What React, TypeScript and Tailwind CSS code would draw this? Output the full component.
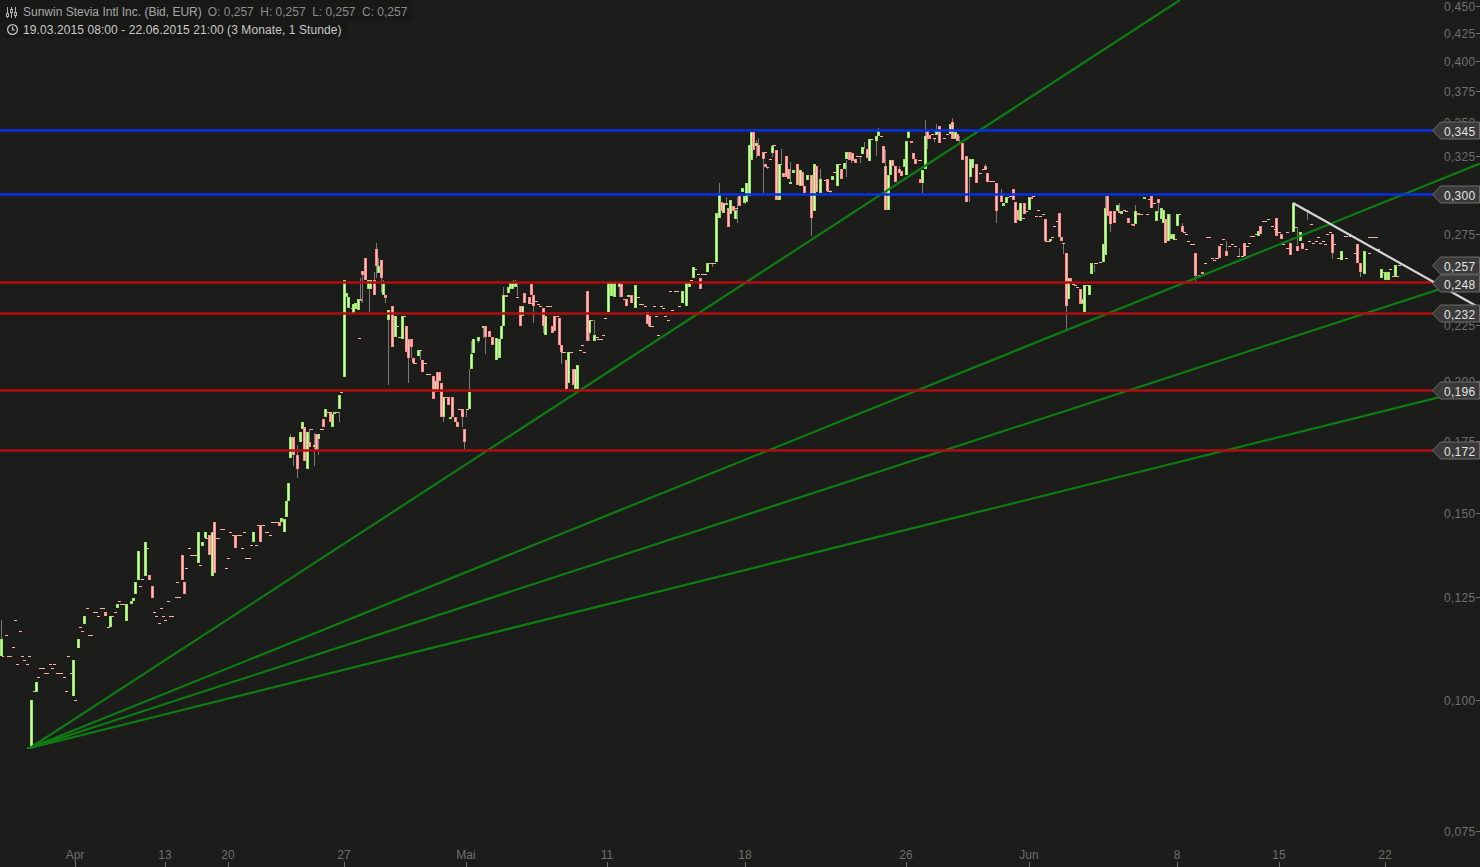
import React from 'react';

type Bar = [number, number, number];

const greens: Bar[] = [
  [1, 639, 656], [31, 700, 748], [36, 682, 692], [73, 660, 696], [78, 639, 648], [84, 616, 624], [110, 616, 627],
  [117, 604, 608], [126, 604, 621], [131, 601, 604], [133, 598, 601], [135, 582, 594], [138, 551, 580], [145, 542, 576],
  [198, 532, 563], [202, 542, 546], [205, 532, 538], [212, 532, 576], [253, 532, 542], [281, 518, 522], [284, 519, 532],
  [286, 501, 517], [288, 483, 501], [290, 437, 458], [300, 432, 442], [302, 422, 429], [307, 432, 469], [314, 445, 447],
  [318, 434, 439], [325, 409, 417], [332, 414, 427], [334, 412, 414], [339, 395, 409], [344, 280, 377], [346, 293, 297],
  [348, 297, 308], [353, 304, 314], [355, 303, 309], [358, 299, 310], [368, 280, 289], [370, 280, 289], [378, 266, 273],
  [383, 284, 295], [388, 310, 320], [395, 316, 337], [402, 316, 339], [418, 350, 356], [435, 381, 392], [443, 397, 417],
  [450, 417, 419], [469, 392, 409], [471, 354, 369], [473, 339, 353], [478, 337, 341], [483, 326, 328], [496, 338, 360],
  [499, 339, 358], [501, 326, 339], [503, 295, 326], [508, 287, 293], [510, 283, 289], [512, 283, 289], [515, 283, 287],
  [522, 306, 316], [545, 316, 335], [568, 352, 383], [575, 369, 389], [577, 365, 389], [589, 320, 333], [594, 335, 341],
  [608, 283, 312], [611, 283, 296], [614, 283, 297], [619, 283, 287], [628, 295, 297], [635, 285, 308], [682, 291, 303],
  [686, 283, 306], [689, 283, 287], [693, 267, 278], [707, 263, 272], [716, 213, 262], [719, 194, 218], [723, 203, 213],
  [730, 200, 214], [735, 210, 219], [742, 188, 192], [744, 196, 203], [746, 183, 202], [749, 145, 196], [751, 132, 160],
  [756, 143, 146], [772, 146, 153], [779, 164, 200], [790, 182, 184], [793, 170, 173], [800, 170, 186], [807, 175, 180],
  [814, 164, 211], [820, 179, 193], [832, 176, 180], [837, 164, 186], [844, 163, 169], [846, 152, 159], [862, 147, 154],
  [869, 139, 161], [876, 136, 141], [878, 131, 136], [888, 175, 210], [890, 160, 175], [904, 159, 167], [906, 141, 175],
  [908, 131, 138], [922, 170, 183], [925, 136, 169], [936, 131, 135], [950, 124, 134], [955, 132, 139], [970, 159, 177],
  [972, 159, 168], [1003, 203, 206], [1006, 197, 203], [1020, 203, 221], [1029, 197, 210], [1050, 239, 241],
  [1068, 278, 299], [1082, 299, 304], [1084, 285, 312], [1089, 285, 295], [1091, 263, 274], [1103, 244, 262],
  [1105, 208, 255], [1117, 205, 211], [1121, 211, 214], [1135, 211, 224], [1144, 197, 199], [1156, 211, 221],
  [1161, 208, 219], [1163, 210, 223], [1168, 214, 241], [1171, 234, 239], [1173, 234, 239], [1177, 214, 226],
  [1258, 231, 236], [1268, 219, 220], [1293, 203, 232], [1300, 232, 241], [1341, 251, 260], [1364, 251, 274],
  [1381, 269, 278], [1385, 272, 280], [1388, 272, 280], [1395, 265, 276],
];

const reds: Bar[] = [
  [105, 612, 616], [149, 575, 580], [152, 586, 598], [182, 555, 580], [184, 582, 594], [209, 535, 555], [214, 522, 573],
  [235, 535, 548], [260, 525, 542], [279, 522, 526], [293, 437, 455], [297, 455, 469], [304, 427, 461], [309, 442, 447],
  [316, 434, 450], [323, 419, 427], [330, 413, 422], [360, 299, 301], [362, 271, 275], [365, 258, 280], [374, 280, 295],
  [376, 249, 266], [381, 260, 278], [385, 295, 298], [392, 306, 347], [406, 326, 352], [408, 339, 358], [411, 339, 347],
  [413, 358, 363], [422, 360, 372], [433, 376, 399], [437, 372, 392], [439, 372, 381], [441, 383, 417], [448, 397, 405],
  [452, 397, 417], [455, 417, 422], [457, 422, 427], [462, 409, 417], [464, 429, 442], [485, 326, 337], [489, 331, 337],
  [492, 337, 345], [506, 295, 297], [520, 306, 326], [524, 293, 303], [529, 297, 303], [531, 284, 295], [533, 295, 306],
  [543, 308, 326], [552, 326, 333], [554, 316, 331], [559, 318, 345], [561, 345, 352], [566, 360, 389], [573, 369, 385],
  [587, 291, 341], [621, 284, 297], [626, 299, 306], [631, 295, 303], [647, 312, 324], [649, 316, 326], [700, 278, 289],
  [721, 202, 211], [726, 203, 205], [728, 208, 227], [733, 206, 211], [739, 196, 206], [753, 132, 150], [758, 145, 156],
  [763, 152, 159], [765, 164, 167], [776, 150, 200], [783, 173, 177], [786, 156, 177], [788, 169, 179], [797, 164, 185],
  [802, 172, 186], [804, 186, 193], [811, 175, 218], [816, 166, 192], [827, 179, 191], [841, 169, 179], [849, 152, 160],
  [852, 153, 161], [855, 159, 163], [867, 149, 158], [883, 146, 163], [885, 166, 210], [892, 160, 166], [895, 166, 182],
  [899, 169, 173], [901, 171, 176], [911, 141, 143], [913, 153, 159], [915, 159, 164], [920, 179, 183], [927, 131, 139],
  [929, 135, 139], [939, 126, 143], [952, 122, 139], [957, 134, 141], [962, 143, 160], [966, 156, 202], [976, 164, 183],
  [985, 166, 170], [987, 173, 182], [996, 183, 211], [1001, 195, 202], [1013, 189, 200], [1015, 202, 223], [1017, 210, 220],
  [1024, 203, 214], [1031, 197, 199], [1045, 219, 241], [1059, 213, 237], [1061, 237, 241], [1066, 253, 306], [1070, 278, 283],
  [1080, 289, 304], [1107, 196, 216], [1110, 211, 224], [1114, 211, 223], [1119, 211, 213], [1128, 218, 223], [1133, 224, 226],
  [1138, 213, 215], [1151, 196, 208], [1158, 199, 203], [1165, 219, 243], [1182, 226, 232], [1195, 253, 276], [1202, 272, 274],
  [1219, 246, 258], [1226, 251, 256], [1244, 243, 256], [1260, 226, 234], [1276, 218, 236], [1281, 234, 239], [1290, 243, 255],
  [1297, 246, 251], [1302, 243, 249], [1332, 234, 253], [1357, 244, 263], [1360, 263, 272], [1383, 272, 273],
];

const wicks: Bar[] = [
  [1, 620, 639], [290, 434, 437], [293, 455, 466], [297, 445, 478], [309, 429, 442], [314, 433, 466], [318, 439, 455],
  [339, 412, 422], [360, 278, 299], [362, 275, 303], [369, 289, 313], [374, 272, 280], [376, 243, 249], [376, 266, 278],
  [378, 258, 266], [381, 278, 293], [383, 280, 284], [385, 298, 303], [388, 320, 385], [411, 347, 358],
  [408, 358, 383], [420, 350, 360], [443, 417, 422], [462, 417, 427], [464, 442, 449], [466, 409, 417], [469, 369, 392],
  [471, 341, 354], [478, 341, 343], [483, 328, 338], [485, 337, 354], [503, 287, 295], [513, 280, 283], [515, 280, 283],
  [517, 283, 296], [533, 306, 323], [543, 326, 333], [561, 352, 364], [589, 333, 341], [594, 320, 335], [619, 287, 297],
  [712, 263, 267], [719, 183, 194], [726, 197, 203], [737, 197, 223], [745, 200, 204], [756, 140, 143], [756, 146, 158],
  [758, 138, 145], [763, 159, 193], [767, 167, 169], [772, 153, 157], [781, 149, 164], [790, 162, 182], [811, 218, 236],
  [820, 169, 179], [830, 190, 193], [846, 160, 177], [851, 152, 163], [860, 156, 163], [864, 142, 149], [876, 141, 156],
  [878, 128, 131], [885, 150, 166], [899, 166, 173], [922, 183, 193], [925, 120, 136], [927, 139, 149], [934, 138, 142],
  [936, 124, 131], [952, 118, 122], [959, 136, 143], [969, 177, 202], [985, 164, 166], [996, 211, 223], [1001, 189, 195],
  [1063, 244, 254], [1066, 306, 330], [1094, 265, 272], [1105, 196, 208], [1110, 224, 232], [1119, 203, 211], [1135, 205, 211],
  [1158, 203, 213], [1170, 214, 234], [1182, 223, 226], [1195, 276, 281], [1226, 241, 251], [1239, 248, 256], [1297, 227, 245],
  [1307, 210, 220], [1332, 253, 259], [1360, 272, 277],
];

// dashes: from x, to x, y
const dashes: Bar[] = [
  [2, 4, 656], [5, 8, 635], [7, 12, 656], [12, 15, 647], [14, 17, 620], [16, 19, 664], [19, 22, 631], [21, 24, 656], [23, 26, 660],
  [26, 29, 664], [28, 31, 656], [33, 37, 691], [37, 40, 677], [39, 45, 668], [44, 49, 673], [49, 52, 664], [51, 54, 668], [53, 56, 664],
  [56, 63, 673], [63, 66, 677], [65, 68, 691], [67, 70, 656], [70, 73, 673], [74, 77, 700], [79, 82, 627], [81, 84, 631], [86, 89, 608],
  [88, 93, 635], [93, 98, 612], [97, 100, 616], [100, 105, 608], [107, 110, 627], [111, 114, 616], [114, 117, 612], [118, 121, 601],
  [120, 127, 604], [139, 142, 586], [141, 144, 579], [146, 149, 548], [153, 156, 612], [155, 158, 616], [158, 161, 623], [160, 163, 608],
  [162, 165, 616], [164, 167, 620], [167, 170, 601], [169, 174, 616], [175, 178, 597], [176, 179, 582], [178, 181, 597], [185, 188, 568],
  [188, 191, 548], [190, 197, 555], [199, 202, 565], [205, 208, 538], [216, 220, 538], [220, 225, 529], [225, 228, 568], [227, 230, 558],
  [229, 232, 532], [232, 242, 535], [241, 244, 548], [243, 246, 532], [245, 251, 558], [250, 253, 545], [255, 258, 545], [257, 265, 525],
  [265, 269, 532], [269, 272, 535], [271, 279, 522], [310, 313, 429], [320, 324, 429], [326, 332, 412], [334, 339, 412], [340, 343, 392],
  [351, 355, 308], [358, 361, 338], [397, 399, 326], [398, 402, 337], [402, 406, 316], [413, 417, 363], [418, 422, 350], [422, 427, 363],
  [426, 431, 374], [445, 448, 397], [458, 463, 409], [466, 469, 409], [516, 519, 297], [528, 534, 303], [535, 538, 301], [537, 540, 304],
  [539, 542, 306], [546, 552, 306], [554, 559, 316], [561, 566, 352], [568, 573, 352], [579, 582, 350], [581, 584, 345], [583, 586, 352],
  [589, 593, 320], [596, 599, 337], [597, 603, 339], [602, 605, 335], [604, 607, 318], [623, 626, 299], [637, 640, 297], [639, 644, 304],
  [644, 647, 306], [649, 654, 326], [653, 656, 306], [655, 658, 316], [657, 660, 335], [660, 663, 306], [662, 665, 308], [664, 667, 316],
  [667, 670, 320], [669, 672, 291], [671, 674, 310], [674, 679, 291], [678, 681, 306], [690, 693, 280], [694, 697, 269], [697, 700, 274],
  [701, 707, 274], [707, 716, 263], [735, 738, 208], [762, 767, 152], [766, 769, 167], [769, 772, 159], [772, 776, 145], [779, 782, 164],
  [824, 827, 180], [827, 832, 191], [833, 836, 172], [838, 841, 164], [856, 862, 156], [869, 873, 139], [880, 883, 136], [918, 922, 160],
  [931, 934, 134], [933, 936, 138], [943, 946, 138], [946, 949, 134], [979, 982, 173], [982, 985, 169], [987, 995, 181], [1005, 1009, 197],
  [1009, 1013, 196], [1017, 1020, 212], [1025, 1028, 211], [1022, 1025, 218], [1032, 1035, 196], [1037, 1040, 210], [1035, 1038, 216],
  [1039, 1042, 216], [1042, 1045, 214], [1045, 1051, 241], [1051, 1054, 237], [1053, 1056, 226], [1056, 1059, 221], [1062, 1065, 243],
  [1072, 1075, 284], [1074, 1077, 285], [1076, 1079, 287], [1084, 1089, 285], [1094, 1098, 263], [1099, 1102, 262], [1123, 1126, 210],
  [1125, 1128, 211], [1131, 1134, 224], [1138, 1143, 214], [1146, 1149, 214], [1148, 1151, 199], [1153, 1156, 203], [1173, 1177, 239],
  [1178, 1181, 214], [1183, 1186, 232], [1185, 1188, 234], [1187, 1190, 241], [1190, 1195, 244], [1198, 1202, 275], [1204, 1207, 263],
  [1206, 1211, 237], [1211, 1214, 258], [1213, 1216, 260], [1215, 1219, 258], [1220, 1223, 244], [1222, 1225, 239], [1228, 1231, 246],
  [1231, 1234, 244], [1234, 1237, 246], [1237, 1240, 256], [1241, 1244, 256], [1246, 1249, 246], [1248, 1251, 243], [1250, 1255, 236],
  [1255, 1258, 234], [1262, 1267, 221], [1271, 1274, 226], [1274, 1277, 229], [1278, 1281, 232], [1282, 1285, 244], [1286, 1289, 248],
  [1294, 1297, 227], [1305, 1309, 210], [1310, 1313, 224], [1286, 1289, 232], [1305, 1308, 249], [1308, 1311, 241], [1312, 1315, 243],
  [1315, 1318, 241], [1317, 1320, 237], [1319, 1322, 243], [1322, 1325, 241], [1324, 1327, 244], [1326, 1329, 234], [1329, 1332, 232],
  [1333, 1336, 244], [1337, 1340, 258], [1345, 1348, 258], [1344, 1348, 236], [1349, 1355, 236], [1354, 1357, 253], [1368, 1371, 253],
  [1368, 1378, 237], [1377, 1380, 249], [1389, 1392, 269], [1392, 1399, 276], [1398, 1401, 265],
];

const priceTicks: [string, number][] = [
  ['0,450', 6], ['0,425', 33], ['0,400', 61], ['0,375', 91], ['0,350', 122], ['0,325', 156], ['0,275', 234], ['0,225', 325],
  ['0,200', 381], ['0,175', 441], ['0,150', 513], ['0,125', 597], ['0,100', 700], ['0,075', 831],
];

const dateTicks: [string, number][] = [
  ['Apr', 75], ['13', 165], ['20', 228], ['27', 344], ['Mai', 466], ['11', 607], ['18', 745], ['26', 906], ['Jun', 1029],
  ['8', 1177], ['15', 1279], ['22', 1385],
];

const levels: [number, string][] = [
  [130.5, '#0530e8'], [194.5, '#0530e8'], [282.5, '#b00e0e'], [313.5, '#b00e0e'], [390.5, '#b00e0e'], [450.5, '#b00e0e'],
];

const tags: [string, number][] = [
  ['0,345', 130], ['0,300', 194], ['0,257', 265], ['0,248', 283], ['0,232', 313], ['0,196', 390], ['0,172', 450],
];

const Chart: React.FC = () => (
  <svg width="1480" height="867" viewBox="0 0 1480 867" className="block" style={{ fontFamily: '"Liberation Sans", sans-serif' }}>
    {/* axes */}
    {priceTicks.map(([label, y]) => (
      <g key={label} fill="#6f6f6f">
        <text x="1444" y={y + 4.5} fontSize="12" letterSpacing="0.3">{label}</text>
        <rect x="1476" y={y} width="4" height="1" />
      </g>
    ))}
    {dateTicks.map(([label, x]) => (
      <g key={label} fill="#6f6f6f">
        <text x={x} y="859" fontSize="12" textAnchor="middle">{label}</text>
        <rect x={x} y="862" width="1" height="5" />
      </g>
    ))}

    {/* candles */}
    <g shapeRendering="crispEdges">
      {wicks.map(([x, y1, y2], i) => (
        <rect key={i} x={x} y={y1} width="1" height={y2 - y1} fill="#7a7a7a" />
      ))}
      {dashes.map(([x1, x2, y], i) => (
        <rect key={i} x={x1} y={y} width={x2 - x1} height="1" fill="#ffb0a4" />
      ))}
      {greens.map(([x, y1, y2], i) => (
        <g key={i}>
          <rect x={x - 1} y={y1} width="3" height={Math.max(y2 - y1, 1)} fill="#93e860" />
          <rect x={x} y={y1 + 1} width="1" height={Math.max(y2 - y1 - 2, 0)} fill="#d4ffb8" />
        </g>
      ))}
      {reds.map(([x, y1, y2], i) => (
        <g key={i}>
          <rect x={x - 1} y={y1} width="3" height={Math.max(y2 - y1, 1)} fill="#ff8a88" />
          <rect x={x} y={y1 + 1} width="1" height={Math.max(y2 - y1 - 2, 0)} fill="#ffc4c0" />
        </g>
      ))}
    </g>

    {/* trend lines */}
    <rect x="27" y="747" width="4" height="2" fill="#0d7d12" />
    <g stroke="#0d7d12" strokeWidth="2.2" fill="none">
      <line x1="30" y1="748" x2="1180" y2="0" />
      <line x1="30" y1="748" x2="1480" y2="163.5" />
      <line x1="30" y1="748" x2="1480" y2="276" />
      <line x1="30" y1="748" x2="1480" y2="387" />
    </g>
    {levels.map(([y, color]) => (
      <line key={y} x1="0" y1={y} x2="1436" y2={y} stroke={color} strokeWidth="2.4" />
    ))}
    <line x1="1293" y1="203" x2="1480" y2="308" stroke="#d4d4d4" strokeWidth="2.2" />

    {/* price tags */}
    {tags.map(([label, y]) => (
      <g key={label}>
        <path
          d={`M1432.5 ${y + 0.5} L1440.5 ${y - 8} H1479.5 V${y + 9} H1440.5 Z`}
          fill="#3a3a3a"
          stroke="#6b6b6b"
        />
        <text x="1444" y={y + 5.5} fontSize="12" letterSpacing="0.3" fill="#e2e2e2">{label}</text>
      </g>
    ))}
  </svg>
);

const App: React.FC = () => {
  return (
    <div className="relative w-[1480px] h-[867px] overflow-hidden bg-[#1c1c1a] font-['Liberation_Sans',sans-serif]">
      <Chart />

      {/* LEGEND */}
      <div className="absolute left-0 top-0 flex flex-col items-start text-xs leading-[18px]">
        <div className="flex items-center h-[21px] pt-[3px] pl-[6px] pr-[6px] bg-[#181817]">
          <svg width="11" height="11" viewBox="0 0 11 11" className="mr-[6px]" fill="none" stroke="#b5b5b5">
            <path d="M1.5 0v11M5.5 0v11M9.5 0v11" />
            <rect x="0.5" y="6.5" width="2" height="3" fill="#181817" />
            <rect x="4.5" y="2.5" width="2" height="3" fill="#181817" />
            <rect x="8.5" y="5.5" width="2" height="3" fill="#181817" />
          </svg>
          <span className="text-[#a8a8a8]">Sunwin Stevia Intl Inc. (Bid, EUR)</span>
          <span className="ml-[6px] text-[#8c8c8c]">O: 0,257</span>
          <span className="ml-[6.5px] text-[#8c8c8c]">H: 0,257</span>
          <span className="ml-[6.5px] text-[#8c8c8c]">L: 0,257</span>
          <span className="ml-[6.5px] text-[#8c8c8c]">C: 0,257</span>
        </div>
        <div className="flex items-center h-[17px] pl-[7px] pr-[6px] bg-[#181817]">
          <svg width="11" height="11" viewBox="0 0 11 11" className="mr-[5px]" fill="none" stroke="#c8c8c8" strokeWidth="1.2">
            <circle cx="5.5" cy="5.5" r="4.9" />
            <path d="M5.5 2.5v3.5h2.5" />
          </svg>
          <span className="text-[#c8c8c8] tracking-[0.09px]">19.03.2015 08:00 - 22.06.2015 21:00 (3 Monate, 1 Stunde)</span>
        </div>
      </div>
    </div>
  );
};

export default App;
